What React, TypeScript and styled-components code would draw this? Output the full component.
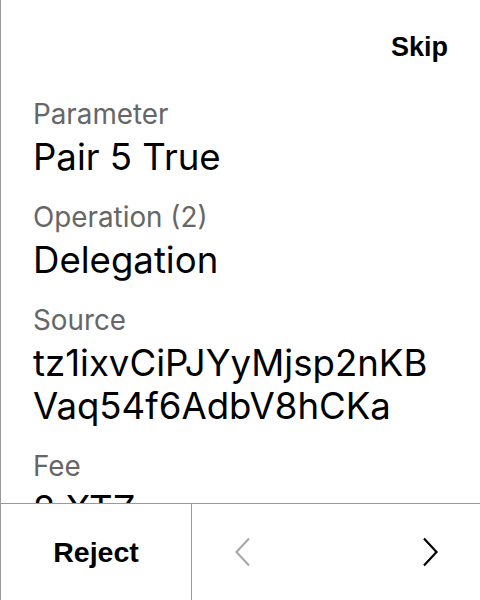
import React from "react";
import styled, { createGlobalStyle } from "styled-components";

const Global = createGlobalStyle`
  html, body { margin: 0; padding: 0; background: #fff; }
  body { font-family: Inter, "Noto Sans", sans-serif; }
`;

const Screen = styled.div`
  width: 480px;
  height: 600px;
  box-sizing: border-box;
  border-left: 1px solid #9a9a9a;
  display: flex;
  flex-direction: column;
  background: #fff;
  overflow: hidden;
`;

const Header = styled.div`
  display: flex;
  justify-content: flex-end;
  padding: 30px 32px 0 32px;
  height: 60px;
  box-sizing: border-box;
`;

const SkipButton = styled.button`
  border: none;
  background: none;
  padding: 0;
  font-family: "Liberation Sans", Arial, sans-serif;
  font-weight: 700;
  font-size: 27px;
  line-height: 34px;
  color: #000;
`;

const Content = styled.div`
  flex: 1;
  overflow: hidden;
  padding: 37.5px 32px 0 32px;
  display: flex;
  flex-direction: column;
  gap: 21.5px;
`;

const Field = styled.div`
  display: flex;
  flex-direction: column;
`;

const Label = styled.div`
  font-size: 27.8px;
  line-height: 32px;
  color: #666;
`;

const Value = styled.div`
  margin-top: 6px;
  font-size: 36.6px;
  line-height: 43.5px;
  color: #000;
  word-break: break-all;
`;

const BottomBar = styled.div`
  height: 96px;
  flex-shrink: 0;
  border-top: 1px solid #9a9a9a;
  display: grid;
  grid-template-columns: 191px 1fr;
`;

const RejectButton = styled.button`
  border: none;
  border-right: 1px solid #9a9a9a;
  background: none;
  font-family: "Liberation Sans", Arial, sans-serif;
  font-weight: 700;
  font-size: 28.5px;
  color: #000;
  padding: 0;
`;

const NavGroup = styled.div`
  display: flex;
  align-items: center;
  justify-content: space-between;
  padding: 0 41px 0 42px;
`;

const NavButton = styled.button<{ $disabled?: boolean }>`
  border: none;
  background: none;
  padding: 0;
  display: flex;
  color: ${(p) => (p.$disabled ? "#aaaaaa" : "#000")};
`;

const Chevron = ({ dir }: { dir: "left" | "right" }) => (
  <svg width="18" height="30" viewBox="0 0 18 30" fill="none">
    <path
      d={dir === "left" ? "M15 1.5 L2.5 15 L15 28.5" : "M3 1.5 L15.5 15 L3 28.5"}
      stroke="currentColor"
      strokeWidth="2.2"
    />
  </svg>
);

const fields = [
  { label: "Parameter", value: "Pair 5 True" },
  { label: "Operation (2)", value: "Delegation" },
  { label: "Source", value: "tz1ixvCiPJYyMjsp2nKBVaq54f6AdbV8hCKa" },
  { label: "Fee", value: "2 XTZ" },
];

export default function App() {
  return (
    <>
      <Global />
      <Screen>
        <Header>
          <SkipButton>Skip</SkipButton>
        </Header>
        <Content>
          {fields.map((f) => (
            <Field key={f.label}>
              <Label>{f.label}</Label>
              <Value>{f.value}</Value>
            </Field>
          ))}
        </Content>
        <BottomBar>
          <RejectButton>Reject</RejectButton>
          <NavGroup>
            <NavButton $disabled>
              <Chevron dir="left" />
            </NavButton>
            <NavButton>
              <Chevron dir="right" />
            </NavButton>
          </NavGroup>
        </BottomBar>
      </Screen>
    </>
  );
}
